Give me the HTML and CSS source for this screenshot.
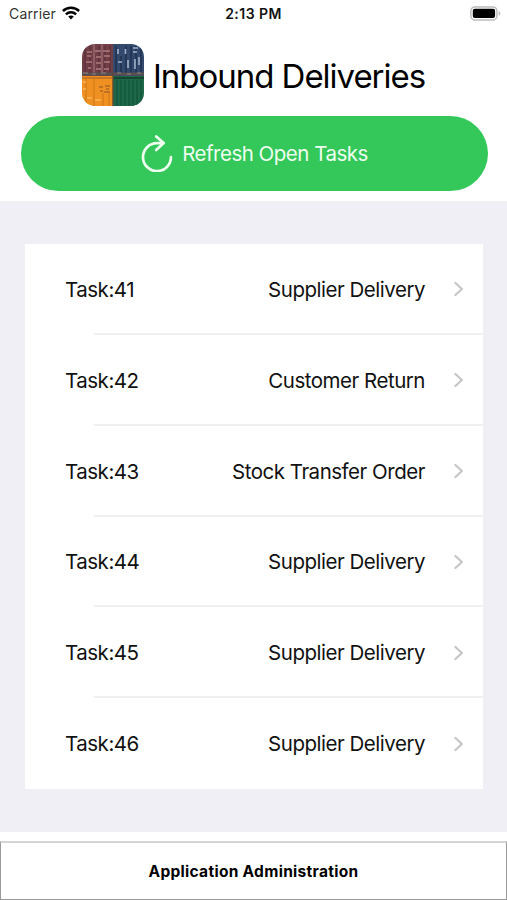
FILE: index.html
```html
<!DOCTYPE html>
<html lang="en">
<head>
<meta charset="utf-8">
<title>Inbound Deliveries</title>
<link rel="stylesheet" href="styles.css">
</head>
<body>
<svg class="symbols" width="0" height="0" aria-hidden="true">
  <symbol id="chevron" viewBox="0 0 12 16"><path d="M2.4 2 8.9 8 2.4 14" fill="none" stroke="#c5c5c7" stroke-width="2.2" stroke-linecap="round" stroke-linejoin="round"/></symbol>
</svg>
<div class="status">
  <div class="carrier"><span>Carrier</span>
    <svg width="18" height="14" viewBox="0 0 18 14" fill="none" stroke="#000" stroke-width="2.5"><path d="M.9 5C5.4.6 12.6.6 17.1 5M3.9 8.3c2.9-2.8 7.3-2.8 10.2 0"/><path d="M6.2 10.6c1.6-1.5 4-1.5 5.6 0L9 13.5z" fill="#000" stroke="none"/></svg>
  </div>
  <div class="clock">2:13 PM</div>
  <svg class="battery" width="31" height="15" viewBox="0 0 31 15"><rect x=".9" y=".9" width="26" height="13" rx="4" fill="#fff" stroke="#bcbcbc" stroke-width="1.5"/><rect x="2.8" y="2.8" width="22.3" height="9.3" rx="2"/><path d="M28.6 5q1.8.6 1.8 2.4t-1.8 2.4z" fill="#bcbcbc"/></svg>
</div>
<header class="title">
  <svg class="app-icon" width="62" height="62" viewBox="0 0 62 62">
    <defs><clipPath id="round"><rect width="62" height="62" rx="13"/></clipPath></defs>
    <g clip-path="url(#round)">
      <path fill="#713f45" d="M0 0h32v32H0z"/>
      <path fill="#33496d" d="M31 0h31v32H31z"/>
      <path fill="#f09020" d="M0 32h31v30H0z"/>
      <path fill="#1d6849" d="M31 32h31v30H31z"/>
      <path d="M3 2v27M8 2v27M17 2v27M23 2v27M28 2v27" stroke="#5d3540" stroke-width="1.5"/>
      <path d="M5 8h5M13 7h6M21 7h7M5 12h4M14 13h5M22 12h6M4 18h6M14 19h5M22 18h6M6 24h3M14 25h5M22 25h5" stroke="#ad7b7e" stroke-width="1.5"/>
      <path d="M12 0v29M20 0v29" stroke="#b89094" stroke-width=".8"/>
      <path d="M34 2v27M39 12v17M44 2v27M49 2v27M54 2v27M59 2v27" stroke="#243655" stroke-width="1.8"/>
      <path d="M36 5v5M43.500 5v5M51 4h5M51 8h4M36 18h4M46 16v8M53 15v10M57 13v8" stroke="#a1b2ca" stroke-width="1.6"/>
      <path d="M0 30h62" stroke="#5a5052" stroke-width="3.2"/>
      <path d="M1 29h5M10 30h4M19 29h5M35 29h4M45 30h4M55 29h4" stroke="#8d8581"/>
      <path d="M0 34h30" stroke="#a45f25" stroke-width="1.2"/>
      <path d="M4 35v27M12 35v27M21 49v13M27 49v13" stroke="#ce7a1f" stroke-width="1.1"/>
      <path d="M1 38h3M1 45h3M5 54h5M13 56h6" stroke="#f6b557" stroke-width="1.4"/>
      <path d="M17 43h4M23 42h5M18 47h3M22 48h6M24 45h3" stroke="#8a5526" stroke-width="1.2"/>
      <path d="M31 29v33" stroke="#5b4a38" stroke-width="1.4"/>
      <path d="M32 34h30" stroke="#16462f" stroke-width="2"/>
      <path d="M35 36v26M39 36v26M43 36v26M47 36v26M51 36v26M55 36v26M59 36v26" stroke="#13563b" stroke-width="1.3"/>
    </g>
  </svg>
  <h1>Inbound Deliveries</h1>
</header>
<button class="refresh">
  <svg width="32" height="38" viewBox="0 0 32 38" fill="none" stroke="#edffef" stroke-width="2.7" stroke-linecap="round" stroke-linejoin="round"><path d="M22.300 9.1H16A14 14 0 1 0 30 23M15.200 2.500l7.500 6.600-7.500 7"/></svg>
  <span>Refresh Open Tasks</span>
</button>
<main class="content">
  <ul class="tasks">
    <li><span class="id">Task:41</span><span class="kind">Supplier Delivery</span><svg class="chevron"><use href="#chevron"/></svg></li>
    <li><span class="id">Task:42</span><span class="kind">Customer Return</span><svg class="chevron"><use href="#chevron"/></svg></li>
    <li><span class="id">Task:43</span><span class="kind">Stock Transfer Order</span><svg class="chevron"><use href="#chevron"/></svg></li>
    <li><span class="id">Task:44</span><span class="kind">Supplier Delivery</span><svg class="chevron"><use href="#chevron"/></svg></li>
    <li><span class="id">Task:45</span><span class="kind">Supplier Delivery</span><svg class="chevron"><use href="#chevron"/></svg></li>
    <li><span class="id">Task:46</span><span class="kind">Supplier Delivery</span><svg class="chevron"><use href="#chevron"/></svg></li>
  </ul>
</main>
<button class="admin">Application Administration</button>
</body>
</html>
```
FILE: styles.css
```css
* { box-sizing: border-box; }
body {
  margin: 0;
  height: 900px;
  display: flex;
  flex-direction: column;
  background: #fff;
  color: #111;
  font-family: Inter, "Liberation Sans", sans-serif;
  overflow: hidden;
}
button { font-family: inherit; }
.symbols { position: absolute; }
.status {
  height: 27px;
  flex: none;
  display: grid;
  grid-template-columns: 1fr auto 1fr;
  align-items: center;
  padding: 0 6px 0 9px;
  font-size: 14px;
}
.carrier { display: flex; align-items: center; gap: 6px; color: #333; letter-spacing: 0.15px; }
.carrier svg { margin-top: -1px; }
.clock { font-weight: 600; letter-spacing: 0.45px; margin-right: 3px; }
.battery { justify-self: end; margin-top: -1px; }
.title {
  height: 62px;
  margin-top: 17px;
  flex: none;
  display: flex;
  align-items: center;
  padding-left: 82px;
  gap: 9px;
}
h1 {
  margin: 1px 0 0;
  font-size: 33px;
  font-weight: 400;
  letter-spacing: -1.03px;
  white-space: nowrap;
  color: #000;
}
.refresh {
  height: 75px;
  flex: none;
  margin: 10px 19px 10px 21px;
  padding: 0;
  border: 0;
  border-radius: 38px;
  background: #34c759;
  color: #edffef;
  display: flex;
  align-items: center;
  justify-content: center;
  gap: 9px;
  font-size: 20.5px;
  letter-spacing: -0.5px;
}
.refresh svg { margin-top: -1px; }
.content {
  height: 631px;
  flex: none;
  background: #f0eff5;
  padding: 43px 24px 43px 25px;
}
.tasks {
  list-style: none;
  margin: 0;
  padding: 0;
  height: 545px;
  background: #fff;
  display: grid;
  grid-template-rows: repeat(6, 1fr);
}
.tasks li {
  display: flex;
  align-items: center;
  padding: 0 18px 0 40px;
  font-size: 20.5px;
  letter-spacing: -0.48px;
  background: linear-gradient(#f0f0f2, #f0f0f2) 69px 100% / 100% 2px no-repeat;
}
.tasks li:last-child { background: none; }
.kind { margin-left: auto; }
.chevron { width: 12px; height: 16px; margin-left: 28px; }
.admin {
  height: 59px;
  flex: none;
  margin-top: 9px;
  padding: 0;
  background: #fff;
  border: 1.5px solid #999;
  border-top: 2px solid #d5d5d5;
  font-size: 15.5px;
  font-weight: 700;
  letter-spacing: 0.3px;
  color: #000;
}
```
